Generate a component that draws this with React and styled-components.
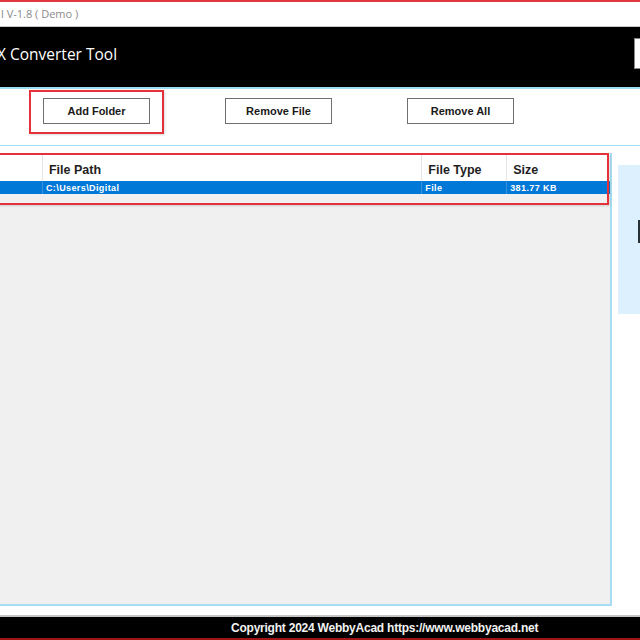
import styled, { createGlobalStyle } from 'styled-components';

const GlobalStyle = createGlobalStyle`
    html, body {
        margin: 0;
        padding: 0;
        background: #ffffff;
        overflow: hidden;
    }
    * {
        box-sizing: border-box;
    }
`;

const columns = [
    { key: 'name', label: '', width: 42 },
    { key: 'path', label: 'File Path', width: 380 },
    { key: 'type', label: 'File Type', width: 85 },
    { key: 'size', label: 'Size', width: 104 },
];

const files = [
    { name: '', path: 'C:\\Users\\Digital', type: 'File', size: '381.77 KB' },
];

export default function App() {
    return (
        <Window>
            <GlobalStyle />
            <TopEdge />
            <TitleBar>l V-1.8 ( Demo )</TitleBar>
            <Header>
                <AppTitle>X Converter Tool</AppTitle>
                <LogoBox />
            </Header>
            <Toolbar>
                <Highlight>
                    <ToolButton>Add Folder</ToolButton>
                </Highlight>
                <ToolButton $offset>Remove File</ToolButton>
                <ToolButton $offset>Remove All</ToolButton>
            </Toolbar>
            <Main>
                <TablePanel>
                    <HeaderRow>
                        {columns.map((col) => (
                            <HeadCell key={col.key} $width={col.width}>
                                {col.label}
                            </HeadCell>
                        ))}
                    </HeaderRow>
                    {files.map((file, i) => (
                        <FileRow key={i} $selected>
                            {columns.map((col) => (
                                <Cell key={col.key} $width={col.width}>
                                    {file[col.key]}
                                </Cell>
                            ))}
                        </FileRow>
                    ))}
                    <TableHighlight />
                </TablePanel>
                <SidePanel>
                    <SideMark />
                </SidePanel>
            </Main>
            <Footer>Copyright 2024 WebbyAcad https://www.webbyacad.net</Footer>
            <BottomEdge />
        </Window>
    );
}

const Window = styled.div`
    width: 640px;
    height: 640px;
    display: flex;
    flex-direction: column;
    background: #ffffff;
    font-family: 'Open Sans', 'Noto Sans', sans-serif;
    overflow: hidden;
`;

const TopEdge = styled.div`
    height: 2px;
    flex-shrink: 0;
    background: #e0363c;
`;

const TitleBar = styled.div`
    height: 25px;
    flex-shrink: 0;
    display: flex;
    align-items: center;
    padding: 0 0 1px 1px;
    font-size: 11px;
    color: #8a8a8a;
    border-bottom: 1px solid #c9c9c9;
`;

const Header = styled.div`
    height: 62px;
    flex-shrink: 0;
    background: #000000;
    display: flex;
    align-items: center;
    justify-content: space-between;
    border-bottom: 2px solid #9ddcf3;
`;

const AppTitle = styled.div`
    color: #ffffff;
    font-size: 15.5px;
    margin-left: -3px;
    margin-top: -7px;
`;

const LogoBox = styled.div`
    width: 12px;
    height: 31px;
    margin-right: -6px;
    margin-top: -7px;
    background: #ffffff;
    border: 1px solid #888888;
`;

const Toolbar = styled.div`
    height: 57px;
    flex-shrink: 0;
    display: flex;
    align-items: flex-start;
    gap: 75px;
    padding: 1px 0 0 29px;
    border-bottom: 1px solid #9ddcf3;
`;

const Highlight = styled.div`
    padding: 6px 12px 8px;
    border: 2px solid #e5323a;
    margin-right: -14px;
    box-shadow: 1px 1px 2px rgba(0, 0, 0, 0.15);
`;

const ToolButton = styled.button`
    display: block;
    width: 107px;
    height: 26px;
    margin-top: ${({ $offset }) => ($offset ? '8px' : '0')};
    background: #ffffff;
    border: 1px solid #6f6f6f;
    font-family: 'Liberation Sans', Arial, sans-serif;
    font-weight: 700;
    font-size: 11px;
    color: #1a1a1a;
    padding: 0;
`;

const Main = styled.div`
    display: flex;
    align-items: flex-start;
    padding-top: 7px;
    height: 469px;
    flex-shrink: 0;
`;

const TablePanel = styled.div`
    position: relative;
    width: 612px;
    height: 453px;
    background: #f0f0f0;
    border-right: 2px solid #a6ddf2;
    border-bottom: 2px solid #a6ddf2;
`;

const HeaderRow = styled.div`
    display: flex;
    height: 28px;
    background: #ffffff;
`;

const HeadCell = styled.div`
    width: ${({ $width }) => $width}px;
    display: flex;
    align-items: center;
    padding: 5px 0 0 6px;
    border-left: 1px solid #e4e4e4;
    font-family: 'Liberation Sans', Arial, sans-serif;
    font-weight: 700;
    font-size: 12.5px;
    color: #1e1e1e;

    &:first-child {
        border-left: none;
    }
`;

const FileRow = styled.div`
    display: flex;
    height: 13px;
    background: ${({ $selected }) => ($selected ? '#0078d7' : 'transparent')};
    color: ${({ $selected }) => ($selected ? '#ffffff' : '#1e1e1e')};
`;

const Cell = styled.div`
    width: ${({ $width }) => $width}px;
    display: flex;
    align-items: center;
    padding-left: 3px;
    border-left: 1px solid #3b8fd6;
    font-family: 'Liberation Sans', Arial, sans-serif;
    font-weight: 700;
    font-size: 9px;
    letter-spacing: 0.4px;
    white-space: pre;

    &:first-child {
        border-left: none;
    }
`;

const TableHighlight = styled.div`
    position: absolute;
    top: 0;
    left: -3px;
    width: 612px;
    height: 52px;
    border: 2px solid #e5323a;
    box-shadow: 1px 1px 2px rgba(0, 0, 0, 0.15);
    pointer-events: none;
`;

const SidePanel = styled.div`
    width: 24px;
    height: 149px;
    margin-top: 12px;
    margin-left: 6px;
    background: #dcf0fd;
    display: flex;
    align-items: flex-start;
    justify-content: flex-end;
`;

const SideMark = styled.div`
    width: 3px;
    height: 23px;
    margin-top: 55px;
    margin-right: -1px;
    background: #263238;
`;

const Footer = styled.div`
    height: 23px;
    flex-shrink: 0;
    background: #000000;
    border-top: 2px solid #c4c4c4;
    display: flex;
    align-items: center;
    padding-left: 231px;
    font-family: 'Liberation Sans', Arial, sans-serif;
    font-weight: 700;
    font-size: 12px;
    letter-spacing: -0.23px;
    color: #f2f2f2;
    white-space: nowrap;
`;

const BottomEdge = styled.div`
    height: 2px;
    flex-shrink: 0;
    background: #a11414;
`;
